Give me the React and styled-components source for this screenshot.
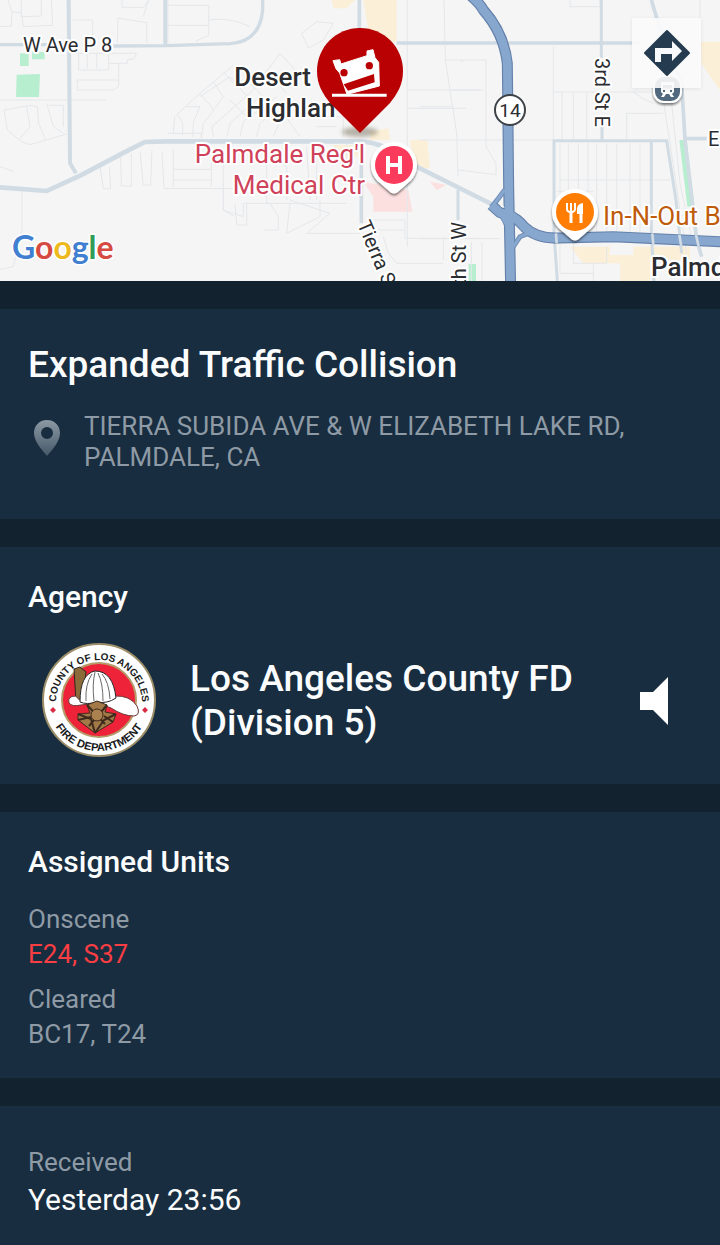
import React from "react";
import styled, { createGlobalStyle } from "styled-components";

const GlobalStyle = createGlobalStyle`
  * {
    box-sizing: border-box;
  }

  body {
    margin: 0;
    background-color: #13222f;
    color: #fbfcfd;
    font-family: Roboto, "Liberation Sans", sans-serif;
  }
`;

const Page = styled.main`
  display: flex;
  flex-direction: column;
  gap: 28px;
  min-height: 100vh;
`;

const MapArea = styled.section`
  position: relative;
  height: 281px;
  overflow: hidden;
  background-color: #f5f5f5;
`;

const MapDrawing = styled.svg`
  display: block;
  width: 100%;
  height: 100%;
`;

const DirectionsButton = styled.button`
  position: absolute;
  top: 18px;
  right: 19px;
  display: grid;
  place-items: center;
  width: 69px;
  height: 70px;
  padding: 0;
  border: 0;
  background-color: rgba(251, 251, 251, 0.9);
  box-shadow: 0 1px 4px rgba(0, 0, 0, 0.08);
  cursor: pointer;
`;

const MapLabel = styled.text`
  font-size: ${(props) => props.$size || 26}px;
  font-weight: ${(props) => props.$weight || 400};
  fill: ${(props) => props.$color || "#2b2d30"};
  stroke: #ffffff;
  stroke-width: 4px;
  stroke-linejoin: round;
  paint-order: stroke;
`;

const Logo = styled.text`
  font-family: Lato, Roboto, sans-serif;
  font-size: 32px;
  font-weight: 700;
  stroke: #ffffff;
  stroke-width: 3px;
  paint-order: stroke;
`;

const Card = styled.section`
  padding: ${(props) => props.$top || 28}px 28px ${(props) => props.$bottom || 26}px;
  background-color: #182d3f;

  &:last-child {
    flex: 1;
  }
`;

const Title = styled.h1`
  margin: 0;
  font-size: 37px;
  line-height: 44px;
  font-weight: 500;
`;

const Heading = styled.h2`
  margin: 0;
  font-size: 30px;
  line-height: 36px;
  font-weight: 500;
`;

const Address = styled.div`
  display: flex;
  gap: 24px;
  margin-top: 24px;

  svg {
    flex: none;
    margin-top: 9px;
  }
`;

const Muted = styled.p`
  margin: 0;
  font-size: 26px;
  line-height: ${(props) => props.$line || 35}px;
  color: #8e9aa5;
`;

const AgencyRow = styled.div`
  display: flex;
  align-items: center;
  margin-top: 28px;
  padding: 0 24px 0 14px;
`;

const AgencyName = styled.p`
  flex: 1;
  margin: 0 0 0 33px;
  font-size: 37px;
  line-height: 44px;
  font-weight: 500;
`;

const SoundButton = styled.button`
  display: grid;
  place-items: center;
  padding: 0;
  border: 0;
  background: none;
  color: #ffffff;
  cursor: pointer;
`;

const UnitList = styled.dl`
  display: grid;
  gap: 10px;
  margin: 22px 0 0;
`;

const Label = styled.dt`
  font-size: 26px;
  line-height: 35px;
  color: #8e9aa5;
`;

const Value = styled.dd`
  margin: 0;
  font-size: ${(props) => (props.$large ? 30 : 26)}px;
  line-height: ${(props) => (props.$large ? 40 : 35)}px;
  color: ${(props) => props.$color || "#8e9aa5"};
`;

const Times = styled.dl`
  margin: 0;
`;

// Street geometry is drawn at three units per pixel
const streets = [
  "M0 80L34 78L36 36L24 0M36 36L64 38V0M64 38L70 80L158 76L154 0M124 0V48L64 50",
  "M218 60H278V126M352 128L354 54L440 68V128M366 0V22H432L446 0M430 50L446 0",
  "M504 0V128M504 16H626V106L586 124M504 76H626M626 60Q690 50 750 80",
  "M216 160H410L400 178H382V190H326M236 160V210H326V160M262 160V205M290 160V205M232 240H356V190M232 270H340L356 258V240M232 240V270M0 300H320",
  "M12 330L90 316L112 320L116 370L136 418M12 330L22 390L66 426L90 434L200 402M80 320L90 380L60 416M140 310L160 380L190 400M146 316H190V380",
  "M66 576V690L40 800L0 808M0 500L40 514",
  "M520 400L524 350L600 280L700 196M534 345L548 370V405M560 320L600 320L580 365L578 410M600 280L642 330L610 370L604 415M640 245L670 290L645 325M670 215L700 250M504 400H604V416",
  "M300 500L310 566H332L328 500M362 470L364 558H394V460M420 455L430 555H452L456 450M486 455L492 565L720 566M520 450V560M520 508H634M520 540H634M634 440V560M670 566V630L700 648",
  "M640 410L636 380L760 270L840 160L890 215M680 410L690 370L780 290M720 410L730 365L830 290M770 410L780 370L850 310M820 410L850 340L900 410M740 240L800 300M690 300L740 350M800 210L860 280M600 290L690 230L750 300",
  "M670 460V630L730 650V610H810L835 650V690H792M705 610L710 675H740V610M800 440V610H1040M800 470L860 500V600M870 610L860 700L960 650V600M870 600L990 640L920 700H1080M950 450V600M920 440L930 600",
  "M905 100L950 65L1000 70L970 120L925 145ZM1222 0V740M1222 270H1440M1222 325H1400M1120 660H1215V715H1440M1120 690H1215M1150 710L1165 760L1190 790H1330",
  "M950 350H1030V410M950 380H1010M1040 420V490H990",
  "M1332 0L1336 180L1370 400L1374 530M1336 180H1458V440L1488 490V524L1374 510M1350 270H1450M1260 320H1354M1260 420H1658M1380 180Q1384 192 1390 180",
  "M1660 140V420M1660 276H1960M1710 0V20H1800V0M1686 276V420M1720 276V420M1760 276V420M1880 340V420M1880 340H1990M2100 0V80M1900 276Q1930 300 1960 310",
  "M1680 430V700M1705 430V700M1735 430V700M1764 430V700M1790 430V700M1820 430V700M1850 430V700M1890 430V700M1920 430V700M1680 540H2010M1670 574H1780",
  "M1260 716H1500M1330 716V780M1414 726V843M1446 726V843M1680 730V820H1780M1720 730V790H1820V740M1780 790V843M1990 300L2010 430L2060 760M2014 300L2040 550L2080 740",
];

const roads = [
  ["M0 134H220M340 138L500 137L690 131Q780 125 788 30V0", 10],
  ["M206 0L210 490L228 520M496 0V135", 12],
  ["M0 562L140 573L242 526L390 448L435 426L500 424H1080Q1150 425 1240 495L1480 615", 14],
  ["M1078 0V90M1084 420V670M1190 129H1920", 11],
  ["M1374 570V660M1804 0V175M1806 380V420M1662 420V700L1672 843M1658 422H2000L2028 600L2045 760M1954 420V700L1962 843", 9],
  ["M1954 0L1975 70L2045 250L2055 420L2090 720L2105 770M2055 416H2120", 11],
];

const highway =
  "M1404 -20Q1440 10 1450 30Q1512 100 1522 190L1526 560L1532 860M1474 615L1500 638Q1545 645 1572 680Q1610 718 1680 714L1840 710L2180 726";

const ramps = "M1474 622L1490 602L1514 570M1488 630Q1514 650 1528 700M1540 640L1570 676L1630 712M1540 740L1560 710L1600 694";

const labels = [
  { text: "W Ave P 8", x: 23, y: 52, size: 20 },
  { text: "Desert", x: 311, y: 86, size: 26, weight: 500, anchor: "end" },
  { text: "Highlan", x: 246, y: 117, size: 26, weight: 500 },
  { text: "Palmdale Reg'l", x: 365, y: 163, size: 26, color: "#cf4259", anchor: "end" },
  { text: "Medical Ctr", x: 365, y: 194, size: 26, color: "#cf4259", anchor: "end" },
  { text: "In-N-Out Burger", x: 603, y: 225, size: 26, color: "#bf5c0b" },
  { text: "Palmdale", x: 651, y: 276, size: 26, weight: 500 },
  { text: "E Ave", x: 708, y: 146, size: 20 },
  { text: "3rd St E", x: 595, y: 58, size: 20, turn: 90 },
  { text: "5th St W", x: 466, y: 297, size: 20, turn: -90 },
  { text: "Tierra Subida", x: 357, y: 224, size: 20, turn: 67 },
];

const Pin = () => (
  <g>
    <ellipse cx="360" cy="132" rx="18" ry="5" fill="#8d8473" opacity="0.6" filter="url(#groundShadow)" />
    <path
      d="M360 28C336 28 317 47 317 71C317 85 323 94 330 103L360 133L390 103C397 94 403 85 403 71C403 47 384 28 360 28Z"
      fill="#b90003"
    />
    <g transform="translate(180 0) scale(0.33333)">
      <path
        d="M459 182L479 179L483 192L561 167V153L579 149L585 173L596 187L598 258L501 283L479 219L468 206Z"
        fill="#ffffff"
        stroke="#ffffff"
        strokeWidth="3"
        strokeLinejoin="round"
      />
      <path d="M491 253L582 222L584 247L504 272Z" fill="#b90003" />
      <circle cx="492" cy="218" r="11" fill="#b90003" />
      <circle cx="568" cy="197" r="11" fill="#b90003" />
      <path d="M456 286H620" stroke="#ffffff" strokeWidth="9" />
    </g>
  </g>
);

const PlacePin = ({ x, y, color, children }) => (
  <g transform={`translate(${x} ${y})`}>
    <path
      d="M0 -23C-13 -23 -23 -13 -23 0C-23 8 -19 14 -14 18L-5 26Q0 31 5 26L14 18C19 14 23 8 23 0C23 -13 13 -23 0 -23Z"
      fill="#ffffff"
      filter="url(#pinShadow)"
    />
    <circle r="19" fill={color} />
    {children}
  </g>
);

const CityMap = () => (
  <MapDrawing viewBox="0 0 720 281" preserveAspectRatio="xMidYMid slice" role="img" aria-label="Map of Palmdale">
    <defs>
      <filter id="pinShadow" x="-30%" y="-30%" width="160%" height="160%">
        <feDropShadow dx="0" dy="2" stdDeviation="1" floodOpacity="0.5" />
      </filter>
      <filter id="groundShadow" x="-30%" y="-60%" width="160%" height="220%">
        <feGaussianBlur stdDeviation="2" />
      </filter>
    </defs>
    <g transform="scale(0.33333)" fill="none">
      <path d="M60 160H86V198H60ZM96 156H134V178H96ZM50 224L120 222L117 291H48Z" fill="#b8eed0" />
      <path d="M2038 420H2060L2084 620H2062ZM1406 792H1428V843H1406Z" fill="#b8eed0" />
      <path
        d="M995 0H1065L1040 25H1000ZM1090 0H1190V125H1110ZM1110 395L1165 385L1170 420H1110ZM1230 420H1282L1290 505H1240ZM1000 435H1075V470H1010ZM2104 125H2160V270Q2130 230 2104 190Z"
        fill="#fbf0d7"
      />
      <path d="M1710 740H1830V765H1900V740H1950V843H1860V790H1750ZM1950 740H2070V780H1950Z" fill="#fbf0d7" />
      <path d="M1090 545L1225 570L1237 635H1120V590ZM1290 545L1340 555L1310 570Z" fill="#fce0df" />
      {streets.map((d) => (
        <path key={d} d={d} stroke="#e4e7ea" strokeWidth="3" />
      ))}
      {roads.map(([d, width]) => (
        <path key={d} d={d} stroke="#d0dbe3" strokeWidth={width} strokeLinejoin="round" />
      ))}
      <path d={ramps} stroke="#6f8fb9" strokeWidth="15" />
      <path d={highway} stroke="#6582ab" strokeWidth="33" strokeLinejoin="round" />
      <path d={ramps} stroke="#88a7ce" strokeWidth="9" />
      <path d={highway} stroke="#88a7ce" strokeWidth="26" strokeLinejoin="round" />
      <path d="M1668 700L1670 730M1957 700L1960 736M2038 704L2044 740M2088 704L2096 740" stroke="#d0dbe3" strokeWidth="8" />
      <path d="M1503 605L1514 624L1502 620ZM1550 682L1562 692L1552 700Z" fill="#f5f5f5" />
    </g>
    {labels.map(({ text, x, y, size, weight, color, anchor, turn }) => (
      <MapLabel
        key={text}
        $size={size}
        $weight={weight}
        $color={color}
        textAnchor={anchor}
        transform={`translate(${x} ${y}) rotate(${turn || 0})`}
      >
        {text}
      </MapLabel>
    ))}
    <Logo x="12" y="259">
      <tspan fill="#4180d0">G</tspan>
      <tspan fill="#d64b41">o</tspan>
      <tspan fill="#edb91c">o</tspan>
      <tspan fill="#4180d0">g</tspan>
      <tspan fill="#2f9c57">l</tspan>
      <tspan fill="#d64b41">e</tspan>
    </Logo>
    <circle cx="510" cy="110" r="15" fill="#ffffff" stroke="#3d4248" strokeWidth="2" />
    <text x="510" y="117" textAnchor="middle" fontSize="19" fill="#2b2d30">
      14
    </text>
    <PlacePin x={394} y={165} color="#fb3b5c">
      <path d="M-6 -9V9M6 -9V9M-6 0H6" stroke="#ffffff" strokeWidth="4" />
    </PlacePin>
    <PlacePin x={575} y={212} color="#ff7d03">
      <g fill="none" stroke="#ffffff" strokeWidth="2">
        <path d="M-8 -9V-3Q-8 0 -4 0Q0 0 0 -3V-9M-4 -9V0" />
        <path d="M-4 0V11M6 -2V11" strokeWidth="3" />
      </g>
      <path d="M8 -9V2H2V-3Q2 -8 8 -9Z" fill="#ffffff" />
    </PlacePin>
    <rect x="654" y="76" width="27" height="26" rx="10" fill="#536b7e" stroke="#ffffff" strokeWidth="2" filter="url(#pinShadow)" />
    <path d="M661 82H674V92L672 94L674 97H671L669 94H666L664 97H661L663 94L661 92Z" fill="#ffffff" />
    <path d="M663 85H672V88H663ZM663 90H665V92H663ZM670 90H672V92H670Z" fill="#536b7e" />
    <Pin />
  </MapDrawing>
);

const DirectionsIcon = () => (
  <svg width="48" height="48" viewBox="0 0 48 48" aria-hidden="true">
    <path d="M24 2L46 24L24 46L2 24Z" fill="#243b50" stroke="#243b50" strokeWidth="2" strokeLinejoin="round" />
    <path d="M12 33V19H29V12L39 22L29 32V25H18V33Z" fill="#f8f9fc" />
  </svg>
);

const LocationIcon = () => (
  <svg width="32" height="38" viewBox="0 0 32 38" aria-hidden="true">
    <defs>
      <linearGradient id="locationFill" x1="0" y1="0" x2="0" y2="1">
        <stop offset="0" stopColor="#8d99a3" />
        <stop offset="1" stopColor="#44586a" />
      </linearGradient>
    </defs>
    <path
      d="M19 0C11 0 6 6 6 13C6 21 13 29 19 36C25 29 32 21 32 13C32 6 27 0 19 0ZM19 7A6 6 0 1 1 19 19A6 6 0 1 1 19 7Z"
      fill="url(#locationFill)"
      fillRule="evenodd"
    />
  </svg>
);

const Seal = () => (
  <svg width="115" height="115" viewBox="-57 -57 115 115" role="img" aria-label="County of Los Angeles Fire Department">
    <defs>
      <path id="sealTop" d="M-43 3A43 43 0 1 1 43 3" />
      <path id="sealBottom" d="M-51 0A51 51 0 0 0 51 0" />
    </defs>
    <circle r="56" fill="#ffffff" stroke="#9c8e68" strokeWidth="2" />
    <circle r="37" fill="#ee2339" stroke="#b49b68" strokeWidth="2" />
    <g fontFamily="Liberation Sans, Arial, sans-serif" fontSize="11" fontWeight="700" fill="#17191b" textAnchor="middle">
      <text fontSize="10">
        <textPath href="#sealTop" startOffset="50%">
          COUNTY OF LOS ANGELES
        </textPath>
      </text>
      <text>
        <textPath href="#sealBottom" startOffset="50%">
          FIRE DEPARTMENT
        </textPath>
      </text>
    </g>
    <path d="M-46 7L-43 10L-46 13L-49 10ZM46 7L49 10L46 13L43 10Z" fill="#d92b43" />
    <path d="M-25 -31L-19 -33L-13 -28L-17 4L-23 2Z" fill="#8c6b3b" stroke="#30271d" strokeWidth="1" />
    <path
      d="M-30 3Q-32 -4 -23 -4Q-20 2 -12 1L15 -4Q31 -5 38 6Q42 15 35 16Q24 16 12 8Q0 2 -18 5Q-27 7 -30 3Z"
      fill="#ffffff"
      stroke="#6d3738"
      strokeWidth="1"
    />
    <path d="M-19 2Q-19 -26 -4 -29Q14 -29 17 -2Q8 4 -2 2Q-12 5 -19 2Z" fill="#ffffff" stroke="#25282a" strokeWidth="1" />
    <path d="M-13 1Q-14 -16 -7 -26M-5 1Q-7 -16 -4 -28M4 1Q4 -17 -1 -27M11 -1Q10 -18 3 -26" fill="none" stroke="#696969" strokeWidth="1" />
    <path d="M-12 5L-2 1L8 5L6 12L17 14L14 22L-4 33L-21 20V14L-9 13Z" fill="#a27a48" stroke="#3d2a1d" strokeWidth="1" />
    <path d="M-12 5L6 24M8 5L-10 26M-21 14L-8 19L-4 33M17 14L5 20L-4 33M-21 20L-8 17M14 22L5 16" fill="none" stroke="#3d2a1d" strokeWidth="2" />
    <circle cx="-2" cy="15" r="6" fill="#ac8150" stroke="#3d2a1d" strokeWidth="1" />
  </svg>
);

const App = () => {
  return (
    <>
      <GlobalStyle />
      <Page>
        <MapArea>
          <CityMap />
          <DirectionsButton type="button" aria-label="Directions">
            <DirectionsIcon />
          </DirectionsButton>
        </MapArea>

        <Card $top={34} $bottom={46}>
          <Title>Expanded Traffic Collision</Title>
          <Address>
            <LocationIcon />
            <Muted $line={31}>TIERRA SUBIDA AVE &amp; W ELIZABETH LAKE RD, PALMDALE, CA</Muted>
          </Address>
        </Card>

        <Card $top={32}>
          <Heading>Agency</Heading>
          <AgencyRow>
            <Seal />
            <AgencyName>Los Angeles County FD (Division 5)</AgencyName>
            <SoundButton type="button" aria-label="Listen">
              <svg width="34" height="48" viewBox="0 0 34 48" aria-hidden="true">
                <path d="M6 15H19L34 0V48L19 33H6Z" fill="currentColor" />
              </svg>
            </SoundButton>
          </AgencyRow>
        </Card>

        <Card $top={32}>
          <Heading>Assigned Units</Heading>
          <UnitList>
            <div>
              <Label>Onscene</Label>
              <Value $color="#fa3e43">E24, S37</Value>
            </div>
            <div>
              <Label>Cleared</Label>
              <Value>BC17, T24</Value>
            </div>
          </UnitList>
        </Card>

        <Card $top={39}>
          <Times>
            <Label>Received</Label>
            <Value $large $color="#fbfcfd">
              Yesterday 23:56
            </Value>
          </Times>
        </Card>
      </Page>
    </>
  );
};

export default App;
